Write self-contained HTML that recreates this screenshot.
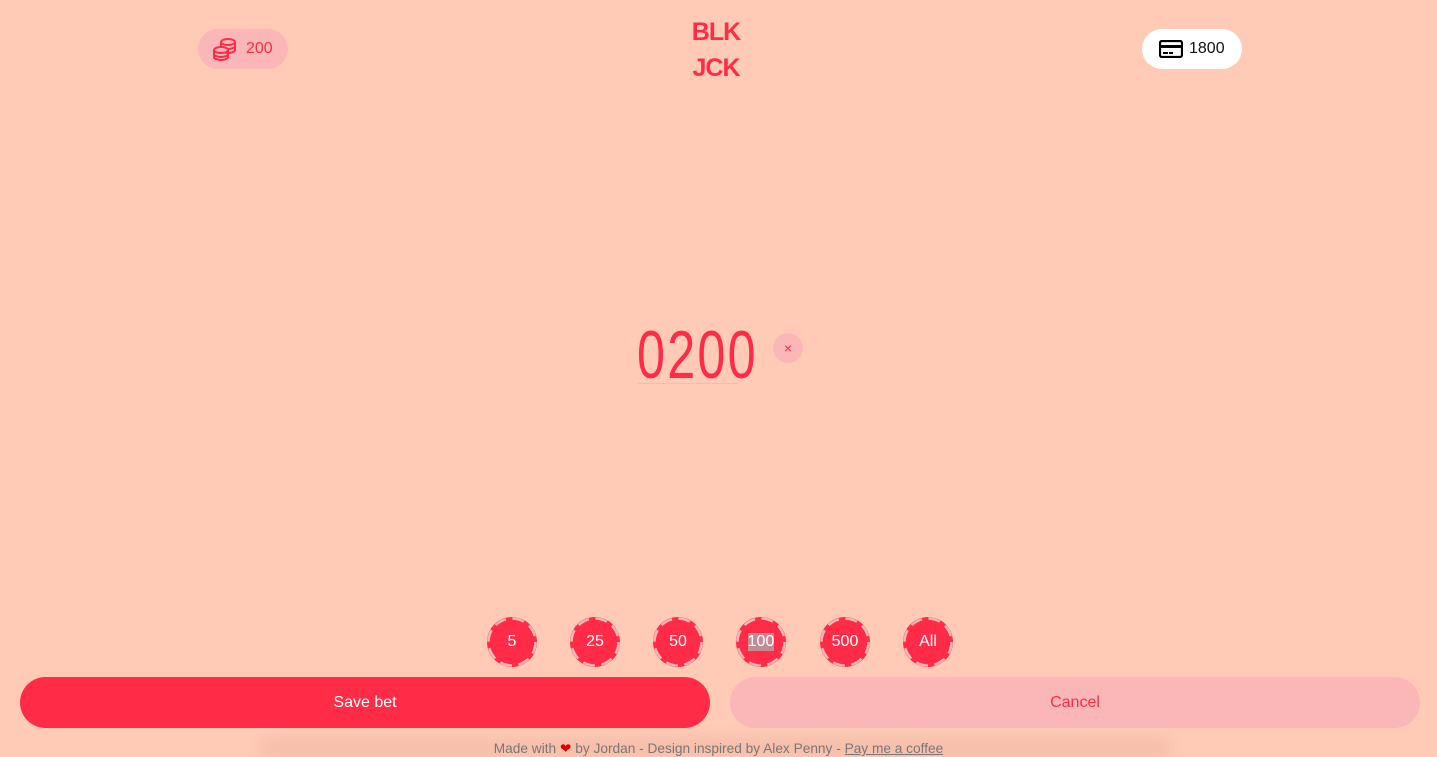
<!DOCTYPE html>
<html><head><meta charset="utf-8"><style>
*{margin:0;padding:0;box-sizing:border-box}
html,body{width:1437px;height:757px;overflow:hidden}
body{background:#ffcbb7;font-family:"Liberation Sans",sans-serif;position:relative}
.pill{position:absolute;height:40px;border-radius:20px;display:flex;align-items:center;font-size:16px}
.chip{position:absolute;top:617px;width:50px;height:50px;border-radius:50%;background:#ff2b47;color:#fff;font-size:16px;display:flex;align-items:center;justify-content:center}
.chip svg{position:absolute;left:0;top:0}
.chip span{position:relative}
.btn{position:absolute;top:677px;height:51px;border-radius:26px;display:flex;align-items:center;justify-content:center;font-size:16px}
</style></head><body>
<div class="pill" style="left:198px;top:29px;width:90px;background:#fbb6b8;color:#ff2b47;padding-left:14px">
<svg width="26" height="24" viewBox="0 0 26 24" fill="none" stroke="#ff2b47" stroke-width="2"><ellipse cx="16" cy="5" rx="7" ry="3"/><path d="M9 5v8c0 1.6 3 3 7 3s7-1.4 7-3V5M9 9c0 1.6 3 3 7 3s7-1.4 7-3"/><ellipse cx="9" cy="13" rx="7" ry="3" fill="#fbb6b8"/><path d="M2 13v7c0 1.6 3 3 7 3s7-1.4 7-3v-7M2 17c0 1.6 3 3 7 3s7-1.4 7-3"/></svg>
<span style="margin-left:8px">200</span></div>
<div style="position:absolute;left:688px;top:14px;width:56px;color:#ff2b47;font-weight:900;font-size:25px;line-height:36px;text-align:center;letter-spacing:-1px">BLK<br>JCK</div>
<div class="pill" style="left:1142px;top:29px;width:100px;background:#fff;color:#111;padding-left:17px">
<svg width="24" height="18" viewBox="0 0 24 18"><rect x="1" y="1" width="22" height="16" rx="2" fill="none" stroke="#000" stroke-width="2.2"/><rect x="1" y="5" width="22" height="3" fill="#000"/><rect x="4" y="12" width="5" height="2" fill="#000"/><rect x="10" y="12" width="4" height="2" fill="#000"/></svg>
<span style="margin-left:6px">1800</span></div>
<div style="position:absolute;left:637px;top:316px;width:140px;color:#ff2b47;font-size:68px;transform:scaleX(0.74);transform-origin:left;letter-spacing:3px">0200</div>
<div style="position:absolute;left:638px;top:383px;width:100px;height:1px;background:#fbb6b8"></div>
<div style="position:absolute;left:773px;top:333px;width:30px;height:30px;border-radius:50%;background:#fbb6b8;color:#ff2b47;font-size:14px;display:flex;align-items:center;justify-content:center">×</div>
<div class="chip" style="left:487px"><svg width="50" height="50"><circle cx="25" cy="25" r="23.5" fill="none" stroke="#fbb6b8" stroke-width="2.5" stroke-dasharray="12 6.5"/></svg><span>5</span></div>
<div class="chip" style="left:570px"><svg width="50" height="50"><circle cx="25" cy="25" r="23.5" fill="none" stroke="#fbb6b8" stroke-width="2.5" stroke-dasharray="12 6.5"/></svg><span>25</span></div>
<div class="chip" style="left:653px"><svg width="50" height="50"><circle cx="25" cy="25" r="23.5" fill="none" stroke="#fbb6b8" stroke-width="2.5" stroke-dasharray="12 6.5"/></svg><span>50</span></div>
<div class="chip" style="left:736px"><svg width="50" height="50"><circle cx="25" cy="25" r="23.5" fill="none" stroke="#fbb6b8" stroke-width="2.5" stroke-dasharray="12 6.5"/></svg><span style="background:#c48a94">100</span></div>
<div class="chip" style="left:820px"><svg width="50" height="50"><circle cx="25" cy="25" r="23.5" fill="none" stroke="#fbb6b8" stroke-width="2.5" stroke-dasharray="12 6.5"/></svg><span>500</span></div>
<div class="chip" style="left:903px"><svg width="50" height="50"><circle cx="25" cy="25" r="23.5" fill="none" stroke="#fbb6b8" stroke-width="2.5" stroke-dasharray="12 6.5"/></svg><span>All</span></div>
<div style="position:absolute;left:260px;top:738px;width:910px;height:19px;background:#f1b9a5;filter:blur(8px);opacity:.8"></div>
<div class="btn" style="left:20px;width:690px;background:#ff2b47;color:#fff">Save bet</div>
<div class="btn" style="left:730px;width:690px;background:#fbb6b8;color:#ff2b47">Cancel</div>
<div style="position:absolute;left:0;top:741px;width:1437px;text-align:center;font-size:13.7px;color:#777">Made with <span style="color:#d00">❤</span> by Jordan - Design inspired by Alex Penny - <u>Pay me a coffee</u></div>
</body></html>
